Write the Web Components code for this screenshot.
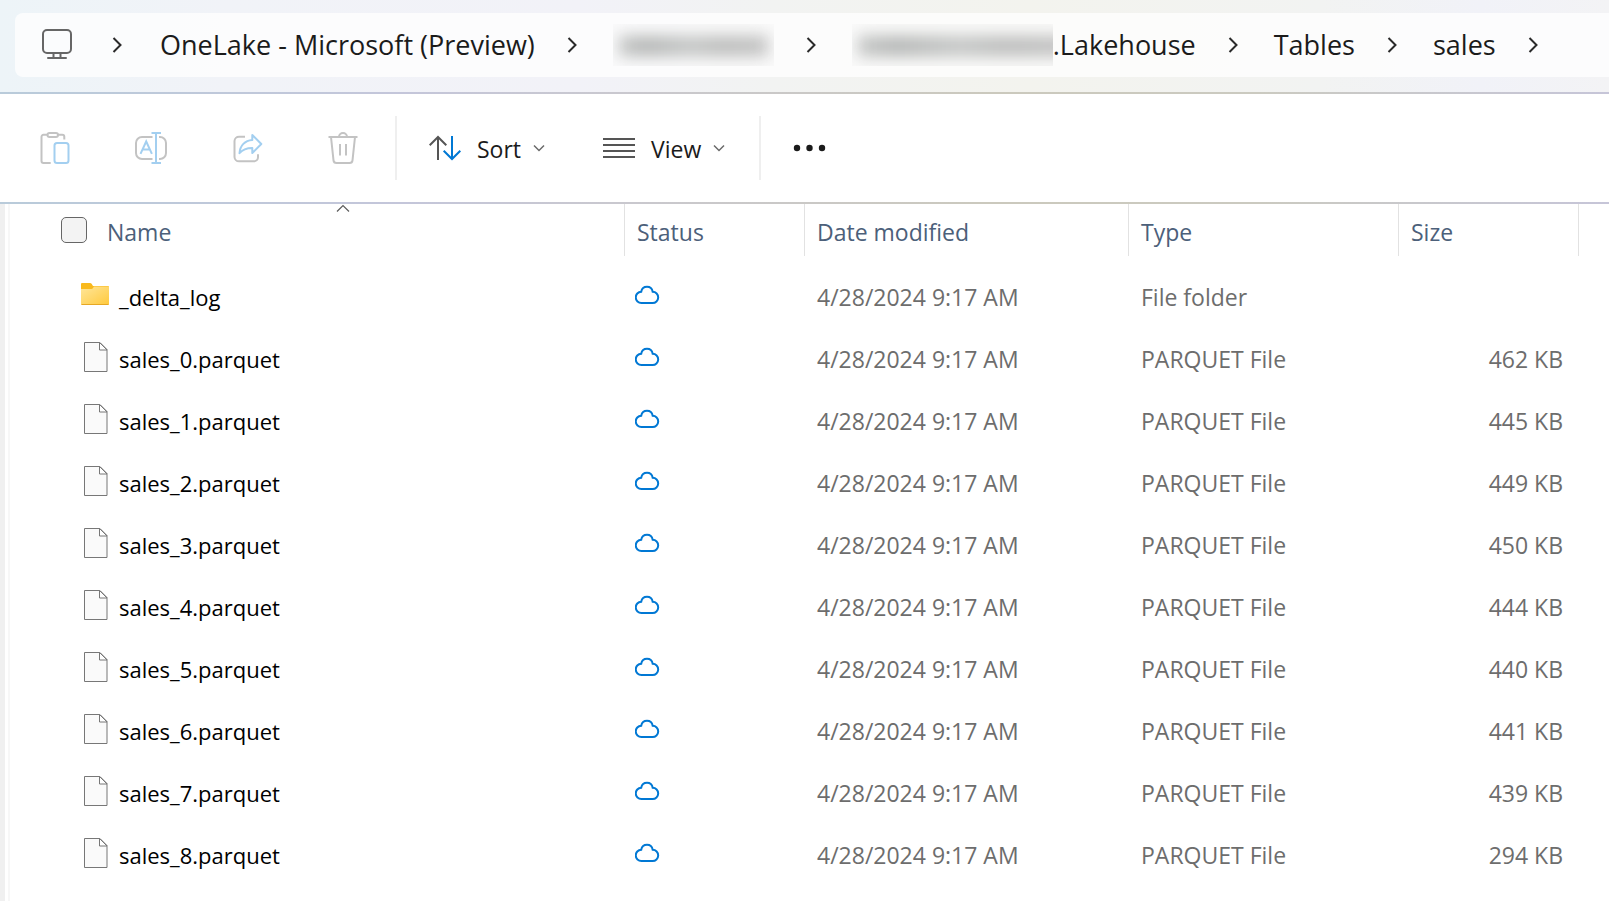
<!DOCTYPE html>
<html lang="en">
<head>
<meta charset="utf-8">
<meta name="viewport" content="width=device-width, initial-scale=1">
<title>sales</title>
<style>
  html, body { height: 100%; }
  body {
    margin: 0;
    background: #fff;
    font-family: "Open Sans", "Noto Sans", sans-serif;
    color: #1b1b1b;
    --tint-line: linear-gradient(90deg, #b9cbda, #c4c6da 25%, #c9c8cf 38%, #cbc9bd 62%, #cbcac0 78%, #c8c8cc 88%, #c6c5d8);
  }
</style>
</head>
<body>
<explorer-window>
  <path-bar slot="path">
    <path-crumb>OneLake - Microsoft (Preview)</path-crumb>
    <path-crumb><redacted-text size="short"></redacted-text></path-crumb>
    <path-crumb><redacted-text size="long"></redacted-text>.Lakehouse</path-crumb>
    <path-crumb>Tables</path-crumb>
    <path-crumb>sales</path-crumb>
  </path-bar>
  <command-bar slot="commands">
    <command-button icon="paste" label="Paste" disabled></command-button>
    <command-button icon="rename" label="Rename" disabled></command-button>
    <command-button icon="share" label="Share" disabled></command-button>
    <command-button icon="trash" label="Delete" disabled></command-button>
    <command-divider></command-divider>
    <command-button icon="sort" menu>Sort</command-button>
    <command-button icon="view" menu>View</command-button>
    <command-divider></command-divider>
    <command-button icon="more" label="See more"></command-button>
  </command-bar>
  <file-list></file-list>
</explorer-window>

<script>
const ICONS = {
  monitor: [30, 32, `<g fill="none" stroke="#666" stroke-width="2"><rect x="1" y="1" width="28" height="23" rx="4"/><path d="M11.5 24v5M18.5 24v5M6 29h18" stroke-linecap="round"/></g>`],
  next: [10, 18, `<path d="M1.5 2 8.5 9l-7 7" fill="none" stroke="#2a2a2a" stroke-width="2"/>`],
  down: [12, 8, `<path d="M1 1.5 6 6.5l5-5" fill="none" stroke="#6a6a6a" stroke-width="1.5"/>`],
  up: [14, 8, `<path d="M1 7.5 7 1.5l6 6" fill="none" stroke="#5c5c5c" stroke-width="1.2"/>`],
  paste: [32, 32, `<g fill="none" stroke="#c3c3c3" stroke-width="2"><path d="M11.7 31H4.5a2 2 0 0 1-2-2V4.8a2 2 0 0 1 2-2h4M19 2.8h4.3a2 2 0 0 1 2 2v2.7"/><rect x="8.5" y="1" width="10.5" height="4" rx="2"/><rect x="15.5" y="11" width="14" height="20" rx="2.5" stroke="#a3cff0"/></g>`],
  rename: [32, 32, `<g fill="none" stroke="#c3c3c3" stroke-width="2"><path d="M17.5 5H7a6 6 0 0 0-6 6v10a6 6 0 0 0 6 6h10.5M24 5h1a6 6 0 0 1 6 6v10a6 6 0 0 1-6 6h-1"/><path stroke="#a3cff0" d="M16.5 1h9.5M16.5 31h9.5M21 1v30M5.5 21.8 11.2 9.5l5.7 12.3M7.5 17.5h7.5"/></g>`],
  share: [32, 32, `<g fill="none" stroke="#c3c3c3" stroke-width="2" stroke-linejoin="round"><path d="M14 4.8H8A4.5 4.5 0 0 0 3.5 9v16A4.5 4.5 0 0 0 8 29.3h15a4 4 0 0 0 4-4v-3"/><path stroke="#a3cff0" d="M21.3 3 30.3 12l-9 9v-5C15 16 11.5 17.5 8.5 21.2 9 13.5 14 8.5 21.3 8z"/></g>`],
  trash: [32, 32, `<g fill="none" stroke="#c3c3c3" stroke-width="2"><path d="M1.5 5h29M12 5a4 4 0 0 1 8 0M4 5l2.5 23.3a3 3 0 0 0 3 2.700h13a3 3 0 0 0 3-2.700L28 5M13 12v11.500M19 12v11.500"/></g>`],
  sort: [32, 32, `<g fill="none" stroke-width="2"><path stroke="#555" d="M9 28V5M.7 13.3 9 5l8.3 8.3"/><path stroke="#0078d4" d="M23 4v23M14.7 18.7 23 27l8.3-8.3"/></g>`],
  view: [32, 32, `<path d="M0 7h32M0 13h32M0 19h32M0 25h32" stroke="#555" stroke-width="2"/>`],
  more: [36, 32, `<g fill="#1b1b1b"><circle cx="4" cy="16" r="3.2"/><circle cx="16.500" cy="16" r="3.2"/><circle cx="29" cy="16" r="3.2"/></g>`],
  folder: [32, 32, `<defs><linearGradient id="f" x1="0" y1="0" x2="1" y2="1"><stop offset="0" stop-color="#ffe69a"/><stop offset="1" stop-color="#ffc93c"/></linearGradient></defs><path d="M2 10V5q0-1 1-1h8q1 0 1.600.8L14 7h15q1 0 1 1v3z" fill="#f9b91c"/><path d="M2 10h10.500q1 0 1.500-1l1-1.500h15V25q0 1-1 1H3q-1 0-1-1z" fill="url(#f)"/><path d="M2.500 25.500h27" stroke="#e6a824"/>`],
  file: [32, 32, `<path d="M5.5 1.5h15.500l7 7v22H5.500z" fill="#fafafa" stroke="#777"/><path d="M20.500 1.500v7.500H28z" fill="#fff" stroke="#777"/>`],
  cloud: [26, 24, `<path d="M6.500 20a5.600 5.600 0 0 1-.3-11.200C6.800 5.500 9.300 3.800 12 3.800s5.100 1.700 5.700 5A5.600 5.600 0 0 1 17.500 20z" fill="none" stroke="#0078d4" stroke-width="2"/>`]
};

function define(name, markup, setup) {
  const template = document.createElement('template');
  template.innerHTML = markup;
  customElements.define(name, class extends HTMLElement {
    connectedCallback() {
      if (this.shadowRoot) return;
      this.attachShadow({ mode: 'open' }).append(template.content.cloneNode(true));
      if (setup) setup(this, this.shadowRoot);
    }
  });
}

define('ui-icon', `<style>:host{display:inline-flex;flex:none}svg{display:block}</style>`, (host, root) => {
  const [w, h, body] = ICONS[host.getAttribute('name')];
  root.innerHTML += `<svg width="${w}" height="${h}" viewBox="0 0 ${w} ${h}" aria-hidden="true">${body}</svg>`;
});

define('redacted-text', `
  <style>
    :host { display: block; height: 42px; overflow: hidden; background: rgba(120,120,120,.01); }
    :host([size="short"]) { width: 161px; }
    :host([size="long"]) { width: 201px; }
    .smear { height: 20px; margin: 12px 6px; filter: blur(8px);
      background: linear-gradient(90deg, #c2c4c3, #b2b4b3 18%, #c2c4c3 48%, #babbba 70%, #c0c0c0); }
    :host([size="long"]) .smear { margin-right: -16px; }
  </style>
  <div class="smear"></div>`);

define('path-crumb', `
  <style>
    :host { display: flex; align-items: center; flex: none; }
    a { display: flex; align-items: center; color: inherit; text-decoration: none; white-space: nowrap; }
    button { display: flex; border: 0; background: none; padding: 0; margin: 0 36px 0 32px; }
  </style>
  <a href="#"><slot></slot></a>
  <button type="button" aria-label="Show subfolders"><ui-icon name="next"></ui-icon></button>`);

define('path-bar', `
  <style>
    :host { display: block; padding: 13px 0 15px 15px;
      background: linear-gradient(90deg, #edf4f8, #f1f3f8 14%, #f2f2f8 36%, #f2f3f2 48%, #f3f3ee 64%, #f2f3f2 82%, #f1f2f8 92%, #f3f3f5); }
    nav { display: flex; align-items: center; height: 64px; padding-left: 27px; overflow: hidden;
      border-radius: 8px 0 0 8px; background: rgba(255,255,255,.75); font-size: 27px; line-height: 36px; }
    button { display: flex; border: 0; background: none; padding: 0; }
    .root { margin-right: 40px; }
    .expand { margin-right: 38px; }
  </style>
  <nav aria-label="Address">
    <button class="root" type="button" aria-label="This PC"><ui-icon name="monitor"></ui-icon></button>
    <button class="expand" type="button" aria-label="Show locations"><ui-icon name="next"></ui-icon></button>
    <slot></slot>
  </nav>`);

define('command-divider', `<style>:host{display:block;flex:none;width:2px;height:64px;margin:0 4px;background:#efefef}</style>`);

define('command-button', `
  <style>
    :host { display: block; flex: none; }
    button { display: flex; align-items: center; height: 64px; padding: 0 30px 0 28px; border: 0; background: none;
      font: inherit; font-size: 23px; line-height: 32px; color: #1b1b1b; }
    :host([disabled]) button { padding: 0 32px; }
    .text { margin: 2px 12px 0 16px; }
  </style>
  <button type="button"></button>`, (host, root) => {
  const button = root.querySelector('button');
  button.append(makeIcon(host.getAttribute('icon')));
  button.disabled = host.hasAttribute('disabled');
  if (host.hasAttribute('label')) button.setAttribute('aria-label', host.getAttribute('label'));
  if (host.hasAttribute('menu')) {
    button.setAttribute('aria-haspopup', 'menu');
    button.insertAdjacentHTML('beforeend', '<span class="text"><slot></slot></span>');
    button.append(makeIcon('down'));
  }
});

function makeIcon(name) {
  const icon = document.createElement('ui-icon');
  icon.setAttribute('name', name);
  return icon;
}

define('command-bar', `
  <style>:host { display: flex; align-items: center; height: 108px; padding-left: 7px; }</style>
  <slot></slot>`);

define('file-list', `
  <style>
    :host { display: block; padding-right: 30px; }
    table { width: 100%; table-layout: fixed; border-collapse: collapse; font-size: 23px; line-height: 32px; }
    th, td { padding: 0; text-align: left; font-weight: 400; white-space: nowrap; }
    .status, .size { width: 180px; }
    .date { width: 324px; }
    .type { width: 270px; }
    .head { position: relative; display: flex; align-items: center; box-sizing: border-box; height: 52px;
      margin-bottom: 10px; padding-left: 12px; border-right: 1px solid #e2e2e2; color: #4c607a; }
    .head label, .head span { margin-top: 3px; }
    .name .head { padding-left: 51px; gap: 20px; }
    .head ui-icon { position: absolute; top: 0; left: 51px; right: 0; justify-content: center; }
    input { appearance: none; flex: none; width: 26px; height: 26px; margin: 0; border: 1px solid #666;
      border-radius: 5px; background: #f3f3f3; }
    td { height: 62px; padding-left: 12px; color: #6d6d6d; }
    td.name { padding-left: 69px; color: #000; font-size: 22px; }
    td.status { padding-left: 10px; }
    td.size { padding-right: 16px; text-align: right; }
    .item { display: flex; align-items: center; gap: 8px; }
    .item ui-icon { margin-bottom: 4px; }
  </style>
  <table>
    <thead><tr>
      <th class="name" scope="col" aria-sort="ascending"><div class="head"><input type="checkbox" id="all"><label for="all">Name</label><ui-icon name="up"></ui-icon></div></th>
      <th class="status" scope="col"><div class="head"><span>Status</span></div></th>
      <th class="date" scope="col"><div class="head"><span>Date modified</span></div></th>
      <th class="type" scope="col"><div class="head"><span>Type</span></div></th>
      <th class="size" scope="col"><div class="head"><span>Size</span></div></th>
    </tr></thead>
    <tbody></tbody>
  </table>`, (host, root) => {
  const sizes = [462, 445, 449, 450, 444, 440, 441, 439, 294];
  const rows = [['folder', '_delta_log', 'File folder', ''],
    ...sizes.map((kb, i) => ['file', `sales_${i}.parquet`, 'PARQUET File', `${kb} KB`])];
  root.querySelector('tbody').innerHTML = rows.map(([icon, name, type, size]) => `
    <tr>
      <td class="name"><div class="item"><ui-icon name="${icon}"></ui-icon><span>${name}</span></div></td>
      <td class="status"><div class="item"><ui-icon name="cloud"></ui-icon></div></td>
      <td class="date">4/28/2024 9:17 AM</td>
      <td class="type">${type}</td>
      <td class="size">${size}</td>
    </tr>`).join('');
});

define('explorer-window', `
  <style>
    :host { display: flex; flex-direction: column; min-height: 100%; overflow: hidden; }
    .line { flex: none; height: 2px; background: var(--tint-line); }
    main { flex: 1; padding-left: 10px;
      background: linear-gradient(90deg, #f0f0f0 5px, #fff 5px, #fff 8px, #f7f7f7 8px, #f7f7f7 10px, #fff 10px); }
  </style>
  <slot name="path"></slot>
  <div class="line"></div>
  <slot name="commands"></slot>
  <div class="line"></div>
  <main><slot></slot></main>`);
</script>
</body>
</html>
